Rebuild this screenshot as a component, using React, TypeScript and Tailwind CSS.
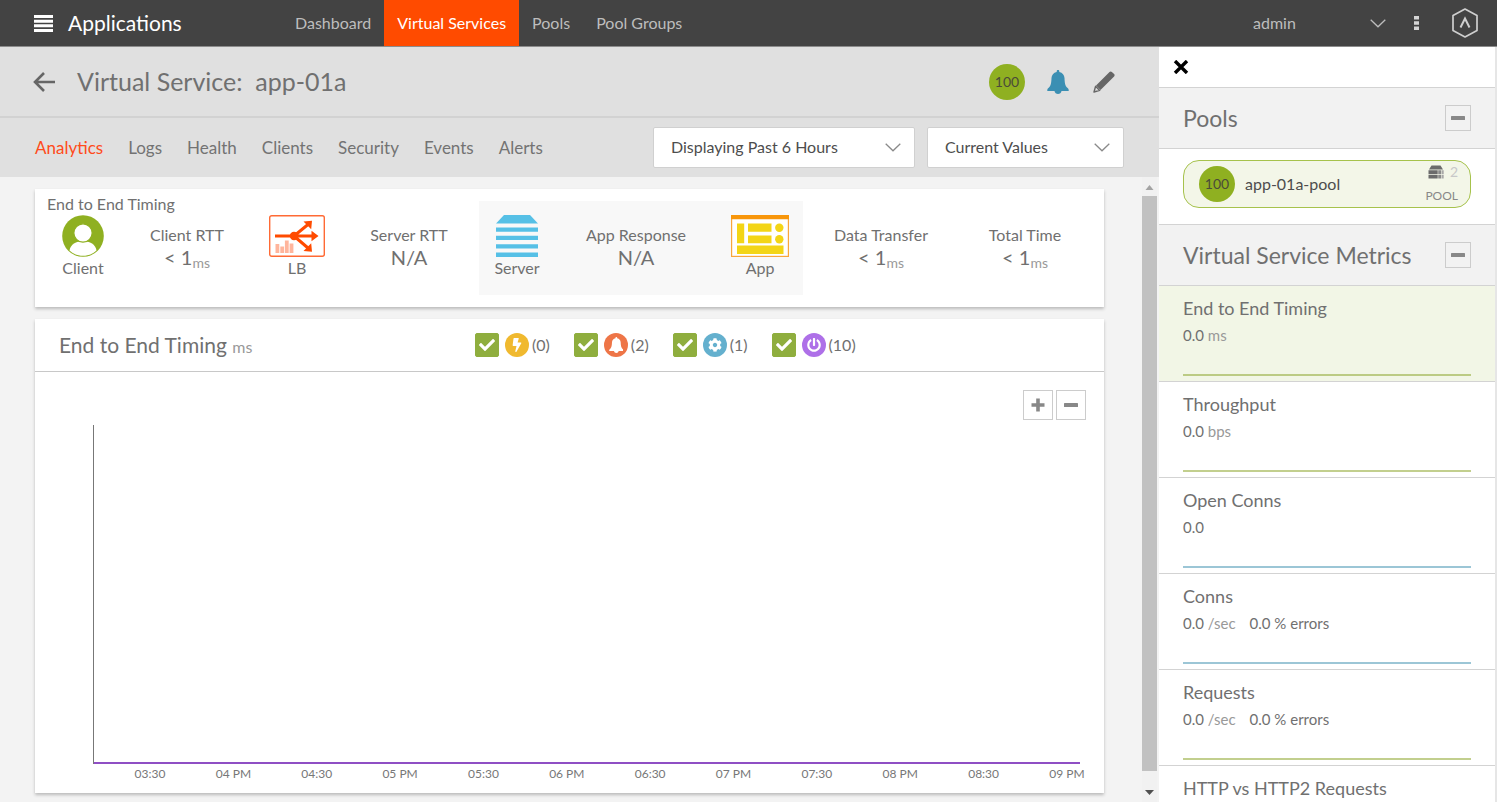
import { useState } from 'react'
import type { ReactNode } from 'react'
import { FaBolt, FaCheck, FaCog, FaPowerOff } from 'react-icons/fa'

const navItems = ['Dashboard', 'Virtual Services', 'Pools', 'Pool Groups']

const tabs = ['Analytics', 'Logs', 'Health', 'Clients', 'Security', 'Events', 'Alerts']

const timeLabels = [
  '03:30', '04 PM', '04:30', '05 PM', '05:30', '06 PM',
  '06:30', '07 PM', '07:30', '08 PM', '08:30', '09 PM',
]

interface Metric {
  name: string
  value?: string
  unit?: string
  errors?: string
  line: string
  active?: boolean
}

const metrics: Metric[] = [
  { name: 'End to End Timing', value: '0.0', unit: 'ms', line: 'bg-[#bccb84]', active: true },
  { name: 'Throughput', value: '0.0', unit: 'bps', line: 'bg-[#c2cf8e]' },
  { name: 'Open Conns', value: '0.0', line: 'bg-[#9cc6d6]' },
  { name: 'Conns', value: '0.0', unit: '/sec', errors: '0.0 % errors', line: 'bg-[#9cc6d6]' },
  { name: 'Requests', value: '0.0', unit: '/sec', errors: '0.0 % errors', line: 'bg-[#c2cf8e]' },
  { name: 'HTTP vs HTTP2 Requests', line: 'bg-[#c2cf8e]' },
]

function BellIcon({ className }: { className: string }) {
  return (
    <svg viewBox="0 0 22 24" className={className} fill="currentColor" aria-hidden="true">
      <path d="M11 0c.8 0 1.300.5 1.300 1.300v.6c3.300.7 5 3 5.200 6.100.2 5 .7 7.500 2.500 9.600.8.800 1.700 1.200 1.700 2.400v1H.3v-1c0-1.200.9-1.600 1.700-2.400 1.800-2.100 2.300-4.600 2.500-9.600.2-3.100 1.900-5.400 5.200-6.100v-.6C9.700.5 10.200 0 11 0z" />
      <path d="M7.500 21h7c-.3 1.900-1.700 3-3.500 3s-3.200-1.100-3.500-3z" />
    </svg>
  )
}

function Chevron({ className }: { className: string }) {
  return (
    <svg viewBox="0 0 16 9" className={className} fill="none" stroke="currentColor" strokeWidth="1.300" aria-hidden="true">
      <path d="M.7.8 8 7.800 15.300.8" />
    </svg>
  )
}

function Plus() {
  return (
    <svg viewBox="0 0 14 14" className="size-3.5" fill="#888" aria-hidden="true">
      <path d="M5.200.5h3.600v4.700h4.700v3.600H8.800v4.700H5.200V8.800H.5V5.200h4.700z" />
    </svg>
  )
}

function Minus() {
  return (
    <svg viewBox="0 0 14 14" className="size-3.5" aria-hidden="true">
      <rect x="0" y="5" width="14" height="4" rx=".6" fill="#888" />
    </svg>
  )
}

function ClientIcon() {
  return (
    <svg viewBox="0 0 42 42" className="h-[42px]" aria-hidden="true">
      <circle cx="21" cy="21" r="20.800" fill="#8fb021" />
      <path d="M7.500 35.500C8.500 29.500 14 26 21 26s12.500 3.500 13.500 9.500C31 39 26.200 40.800 21 40.800S11 39 7.500 35.500z" fill="#fff" />
      <circle cx="21" cy="18" r="9.200" fill="#fff" stroke="#8fb021" strokeWidth="1.300" />
    </svg>
  )
}

function BalancerIcon() {
  return (
    <svg viewBox="0 0 56 42" className="h-[42px]" aria-hidden="true">
      <rect x=".7" y=".7" width="54.600" height="40.600" rx="2" fill="#fff" stroke="#ff6a35" strokeWidth="1.400" />
      <path
        d="M6.500 29h3.800v9H6.500zM11.300 31.500h3.800V38h-3.800zM15.900 25.500h3.800V38h-3.800zM20.600 28.500h3.800V38h-3.800z"
        fill="#ffb59c"
      />
      <path d="M6 21h38M25 21 39 9.500M25 21l14 12" fill="none" stroke="#ff4b00" strokeWidth="3" />
      <circle cx="25" cy="21" r="4.200" fill="#ff4b00" />
      <path d="m42.500 15.800 7 5.200-7 5.200zM34.500 6.500l8.500-.7-.8 8.400zM34.500 36l8.500.7-.8-8.400z" fill="#ff4b00" />
    </svg>
  )
}

function ServerIcon() {
  return (
    <svg viewBox="0 0 42 42" className="h-[42px]" fill="#56c0e6" aria-hidden="true">
      <path d="M8 0h26l8 8.500H0z" />
      <path d="M0 12.500h42v4.200H0zM0 20.800h42V25H0zM0 29.200h42v4.200H0zM0 37.500h42v4.500H0z" />
    </svg>
  )
}

function AppIcon() {
  return (
    <svg viewBox="0 0 58 42" className="h-[42px]" aria-hidden="true">
      <rect x=".6" y=".6" width="56.800" height="40.800" fill="#fff" stroke="#f9a63c" strokeWidth="1.200" />
      <path d="M0 0h58v4.300H0z" fill="#f8960a" />
      <g fill="#f3d516">
        <path d="M6 8.500h7.200v19.800H6zM17 8.500h23.500v8.300H17zM17 20.500h23.500v7.800H17zM6 30.500h46.500V39H6z" />
        <circle cx="48.300" cy="12.800" r="4.200" />
        <circle cx="48.300" cy="24.200" r="4.200" />
      </g>
    </svg>
  )
}

function Node({ label, children }: { label: string; children: ReactNode }) {
  return (
    <div className="flex flex-col items-center">
      {children}
      <span className="mt-px text-base leading-5">{label}</span>
    </div>
  )
}

function Timing({ label, value, unit }: { label: string; value: string; unit?: string }) {
  return (
    <div className="flex flex-col items-center pt-2.5">
      <span className="text-base leading-5 whitespace-nowrap">{label}</span>
      <span className="text-xl leading-6">
        {value}
        {unit && <sub className="bottom-[-3px] text-sm leading-none text-[#999]">{unit}</sub>}
      </span>
    </div>
  )
}

function EventToggle({ name, count, color, children }: { name: string; count: number; color: string; children: ReactNode }) {
  const [checked, setChecked] = useState(true)

  return (
    <label className="flex items-center">
      <span className="relative flex size-6">
        <input
          type="checkbox"
          aria-label={name}
          checked={checked}
          onChange={(e) => setChecked(e.target.checked)}
          className="size-6 appearance-none rounded-xs border border-[#8fae3e] bg-white checked:bg-[#8fae3e]"
        />
        <FaCheck className="pointer-events-none absolute top-1 left-1 size-4 text-white" />
      </span>
      <span className={`ml-1.5 flex size-6 items-center justify-center rounded-full text-white ${color}`}>
        {children}
      </span>
      <span className="ml-[3px] text-base">({count})</span>
    </label>
  )
}

function SectionHeader({ title }: { title: string }) {
  return (
    <div className="flex h-[61px] shrink-0 items-center justify-between border-b border-[#d3d3d3] bg-[#f2f2f2] px-6">
      <h2 className="text-[23px]">{title}</h2>
      <button aria-label={`Collapse ${title}`} className="flex size-[26px] items-center justify-center border border-[#ccc]">
        <Minus />
      </button>
    </div>
  )
}

function TopBar() {
  return (
    <header className="flex h-[47px] shrink-0 items-center border-b border-[#8c8c8c] bg-[#434343] text-[#bdbdbd]">
      <div className="flex w-[282px] items-center pl-[34px] text-white">
        <button aria-label="Menu">
          <svg viewBox="0 0 20 17" className="h-[17px] w-5" fill="#fff" aria-hidden="true">
            <path d="M0 0h19v3H0zM0 4.700h19v3H0zM0 9.300h19v3H0zM0 14h19v3H0z" />
          </svg>
        </button>
        <h1 className="ml-3.5 text-[21px]">Applications</h1>
      </div>
      <nav className="flex self-stretch text-base">
        {navItems.map((item) => (
          <a
            key={item}
            href="#"
            className={`flex items-center px-[13px] whitespace-nowrap ${
              item === 'Virtual Services' ? 'bg-[#ff4b00] text-white' : ''
            }`}
          >
            {item}
          </a>
        ))}
      </nav>
      <div className="ml-auto flex items-center pr-[19px]">
        <button className="flex w-[133px] items-center justify-between text-base">
          admin
          <Chevron className="h-[9px] w-4" />
        </button>
        <button aria-label="More" className="ml-7">
          <svg viewBox="0 0 5 14" className="h-3.5 w-[5px]" fill="#d5d5d5" aria-hidden="true">
            <path d="M0 0h5v3.500H0zM0 5.200h5v3.500H0zM0 10.400h5v3.500H0z" />
          </svg>
        </button>
        <svg viewBox="0 0 26 30" className="ml-[33px] h-[30px] w-[26px]" fill="none" stroke="#cfcfcf" aria-hidden="true">
          <path d="M13 1 25 7.500v15L13 29 1 22.500v-15z" strokeWidth="1.700" strokeLinejoin="round" />
          <path d="m8.500 19.500 4.500-9 4.500 9" strokeWidth="2" />
        </svg>
      </div>
    </header>
  )
}

function Select({ label, options, className }: { label: string; options: string[]; className: string }) {
  return (
    <div className={`relative ${className}`}>
      <select
        aria-label={label}
        className="h-[41px] w-full appearance-none rounded-xs border border-[#d0d0d0] bg-white px-[17px] pb-0.5 text-base text-[#4d4d4d]"
      >
        {options.map((option) => (
          <option key={option}>{option}</option>
        ))}
      </select>
      <Chevron className="pointer-events-none absolute top-4 right-3.5 h-[9px] w-4 text-[#8a8a8a]" />
    </div>
  )
}

function TimingCard() {
  return (
    <section className="grid h-[118px] shrink-0 grid-cols-[96fr_112fr_108fr_128fr_324fr_156fr_132fr_13fr] bg-white pt-2 shadow-[0_2px_3px_#bbb]">
      <div className="min-w-0">
        <h2 className="mb-1 pl-3 text-base leading-3.5 whitespace-nowrap">End to End Timing</h2>
        <Node label="Client">
          <ClientIcon />
        </Node>
      </div>
      <div className="pt-[18px]">
        <Timing label="Client RTT" value="< 1" unit="ms" />
      </div>
      <div className="pt-[18px]">
        <Node label="LB">
          <BalancerIcon />
        </Node>
      </div>
      <div className="pt-[18px] pr-3">
        <Timing label="Server RTT" value="N/A" />
      </div>
      <div className="mt-1 grid h-[94px] grid-cols-[76fr_162fr_86fr] bg-[#f8f8f8] pt-3.5">
        <Node label="Server">
          <ServerIcon />
        </Node>
        <Timing label="App Response" value="N/A" />
        <Node label="App">
          <AppIcon />
        </Node>
      </div>
      <div className="pt-[18px]">
        <Timing label="Data Transfer" value="< 1" unit="ms" />
      </div>
      <div className="pt-[18px]">
        <Timing label="Total Time" value="< 1" unit="ms" />
      </div>
    </section>
  )
}

function ChartCard() {
  return (
    <section className="mt-3 shrink-0 bg-white shadow-[0_2px_3px_#bbb]">
      <div className="flex h-[53px] items-center border-b border-[#c8c8c8]">
        <h2 className="w-[440px] pl-6 text-[21px]">
          End to End Timing <span className="text-base text-[#999]">ms</span>
        </h2>
        <div className="flex gap-6">
          <EventToggle name="Anomalies" count={0} color="bg-[#f0b92f]">
            <FaBolt className="size-3.5" />
          </EventToggle>
          <EventToggle name="Alerts" count={2} color="bg-[#ee7547]">
            <BellIcon className="h-4" />
          </EventToggle>
          <EventToggle name="Config events" count={1} color="bg-[#64b0ce]">
            <FaCog className="size-3.5" />
          </EventToggle>
          <EventToggle name="System events" count={10} color="bg-[#ae70e8]">
            <FaPowerOff className="size-3.5" />
          </EventToggle>
        </div>
      </div>
      <div className="flex justify-end gap-[3px] pt-[18px] pr-[18px]">
        <button aria-label="Zoom in" className="flex size-[30px] items-center justify-center border border-[#ccc]">
          <Plus />
        </button>
        <button aria-label="Zoom out" className="flex size-[30px] items-center justify-center border border-[#ccc]">
          <Minus />
        </button>
      </div>
      {/* Plot area, every series sits flat on the baseline */}
      <div className="mt-[5px] mr-6 ml-[58px] h-[339px] border-l border-[#777]">
        <div className="flex h-full flex-col justify-end">
          <div className="h-0.5 bg-[#8f4fc4]" />
        </div>
      </div>
      <div className="flex justify-between pt-0.5 pr-[17px] pb-[11px] pl-[95px] text-xs text-[#777]">
        {timeLabels.map((label) => (
          <span key={label} className="w-10 text-center whitespace-nowrap">
            {label}
          </span>
        ))}
      </div>
    </section>
  )
}

function ScrollTrack() {
  return (
    <div className="mr-0.5 flex w-[15px] shrink-0 flex-col items-center bg-[#f1f1f1]" aria-hidden="true">
      <svg viewBox="0 0 15 19" className="h-[19px]">
        <path d="m3.500 13 4-5 4 5z" fill="#a3a3a3" />
      </svg>
      <div className="w-full flex-1 bg-[#c1c1c1]" />
      <svg viewBox="0 0 15 31" className="h-[31px]">
        <path d="m3 19 4.500 5 4.500-5z" fill="#505050" />
      </svg>
    </div>
  )
}

function Sidebar() {
  return (
    <aside className="flex w-[338px] shrink-0 flex-col overflow-hidden border-r-2 border-[#e6e6e6] bg-white">
      <div className="flex h-[41px] shrink-0 items-center border-b border-[#d3d3d3] pl-3.5">
        <button aria-label="Close">
          <svg viewBox="0 0 16 14" className="h-3.5 w-4" fill="none" stroke="#000" strokeWidth="3.400" aria-hidden="true">
            <path d="m2 1 12 12M14 1 2 13" />
          </svg>
        </button>
      </div>
      <SectionHeader title="Pools" />
      <div className="h-[76px] shrink-0 border-b border-[#d3d3d3] px-6 pt-[11px]">
        <div className="flex h-12 items-center rounded-2xl border border-[#a6c24c] bg-[#f3f6e8] pr-3 pl-[15px]">
          <span className="flex size-9 items-center justify-center rounded-full bg-[#8fb021] text-sm text-[#4a4a3a]">100</span>
          <a href="#" className="ml-2.5 text-base text-[#4d4d4d]">app-01a-pool</a>
          <div className="ml-auto flex flex-col items-end">
            <div className="flex items-center gap-1.5 text-sm leading-5 text-[#c8c8c8]">
              <svg viewBox="0 0 16 14" className="h-3.5 w-4" aria-hidden="true">
                <path d="M3.500.5h9L15 4.500H1z" fill="#6b6b6b" />
                <path d="M.5 5.300h9.200v3.700H.5zM.5 9.800h9.200v3.700H.5z" fill="#6b6b6b" />
                <path d="M10.200 5.300h3v3.700h-3zM10.200 9.800h3v3.700h-3z" fill="#8a8a8a" />
                <path d="M13.700 5.300h2v3.700h-2zM13.700 9.800h2v3.700h-2z" fill="#a8a8a8" />
              </svg>
              2
            </div>
            <span className="mt-1 text-xs leading-5 text-[#888]">POOL</span>
          </div>
        </div>
      </div>
      <SectionHeader title="Virtual Service Metrics" />
      {metrics.map((metric) => (
        <div
          key={metric.name}
          className={`flex h-24 shrink-0 flex-col border-b border-[#d3d3d3] px-6 pt-2 pb-[5px] ${metric.active ? 'bg-[#f2f6e6]' : ''}`}
        >
          <h3 className="text-lg leading-7">{metric.name}</h3>
          {metric.value && (
            <p className="text-[15px] leading-[26px]">
              {metric.value} {metric.unit && <span className="text-[#999]">{metric.unit}</span>}
              {metric.errors && <span className="ml-3.5">{metric.errors}</span>}
            </p>
          )}
          <div className={`mt-auto h-0.5 ${metric.line}`} />
        </div>
      ))}
    </aside>
  )
}

export default function App() {
  const [tab, setTab] = useState('Analytics')

  return (
    <div className="flex h-screen flex-col overflow-hidden bg-[#f3f3f3] font-['Lato',sans-serif] text-[#707070]">
      <TopBar />
      <div className="flex min-h-0 flex-1">
        <main className="flex min-w-0 flex-1 flex-col">
          <div className="flex h-[71px] shrink-0 items-center border-b-2 border-[#d2d2d2] bg-[#e0e0e0] pr-11 pl-[33px]">
            <button aria-label="Back">
              <svg viewBox="0 0 22 20" className="h-5 w-[22px]" fill="none" stroke="#666" strokeWidth="2.600" aria-hidden="true">
                <path d="M11 1 2 10l9 9M2 10h20" />
              </svg>
            </button>
            <h1 className="ml-[22px] text-[25px] whitespace-pre">Virtual Service:  app-01a</h1>
            <div className="ml-auto flex items-center">
              <span className="flex size-9 items-center justify-center rounded-full bg-[#8fb021] text-sm text-[#4a4a3a]">100</span>
              <button aria-label="Alerts" className="ml-[22px] text-[#3b8fb3]">
                <BellIcon className="h-6" />
              </button>
              <button aria-label="Edit" className="ml-6">
                <svg viewBox="0 0 22 22" className="size-[22px]" aria-hidden="true">
                  <path d="M16.500.9c.7-.7 1.700-.7 2.400 0l2.200 2.200c.7.700.7 1.700 0 2.400L7.500 19 3 14.500z" fill="#666" />
                  <path d="M2.600 15.300 6.700 19.400 1 21z" fill="none" stroke="#666" strokeWidth="1.400" strokeLinejoin="round" />
                </svg>
              </button>
            </div>
          </div>
          <div className="flex h-[59px] shrink-0 items-center justify-between bg-[#e0e0e0] px-[35px]">
            <nav className="flex gap-[25px] text-[17px]">
              {tabs.map((item) => (
                <button key={item} onClick={() => setTab(item)} className={item === tab ? 'text-[#ff4b1a]' : 'text-[#737373]'}>
                  {item}
                </button>
              ))}
            </nav>
            <div className="flex gap-3">
              <Select label="Time range" options={['Displaying  Past 6 Hours']} className="w-[262px]" />
              <Select label="Value type" options={['Current Values']} className="w-[197px]" />
            </div>
          </div>
          <div className="flex min-h-0 flex-1">
            <div className="flex min-w-0 flex-1 flex-col overflow-hidden pt-3 pr-[38px] pl-[35px]">
              <TimingCard />
              <ChartCard />
            </div>
            <ScrollTrack />
          </div>
        </main>
        <Sidebar />
      </div>
    </div>
  )
}
